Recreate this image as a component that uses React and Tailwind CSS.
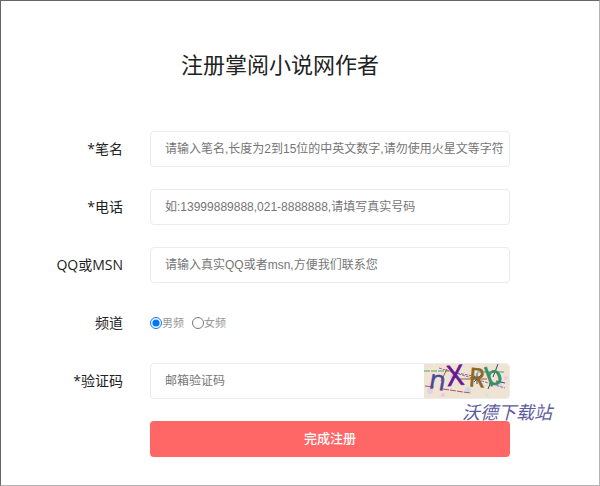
import React from "react";

const cjk = "font-['Liberation_Sans','Noto_Sans_CJK_SC',sans-serif]";

const inputClass =
  "h-9 w-full rounded border border-[#ebebeb] bg-white pl-[14px] text-xs text-[#333] placeholder:text-[#757575] outline-none focus:border-[#ff6666]";

function Row({ id, label, children }) {
  return (
    <div className="grid grid-cols-[122px_1fr] items-center gap-x-[27px]">
      <label
        htmlFor={id}
        className="text-right font-['Open_Sans','Noto_Sans_CJK_SC',sans-serif] text-[14px] leading-5 whitespace-nowrap text-[#222]"
      >
        {label}
      </label>
      {children}
    </div>
  );
}

function Captcha() {
  return (
    <svg
      viewBox="0 0 86 34"
      className="h-[34px] w-[86px] overflow-visible"
      role="img"
      aria-label="nXRb"
    >
      <path d="M1 0H83A3 3 0 0 1 86 3V31A3 3 0 0 1 83 34H1Z" fill="#efe4d4" />
      <g fill="#d9d3ea">
        <circle cx="7" cy="27" r="3" />
        <circle cx="30" cy="13" r="3" />
        <circle cx="45" cy="26" r="3" fill="#c8dcea" />
        <circle cx="20" cy="31" r="2" fill="#f2c6e2" />
        <circle cx="76" cy="20" r="3" />
        <circle cx="83" cy="14" r="2" fill="#f0c9e6" />
        <circle cx="10" cy="5" r="2" fill="#f4edb4" />
        <circle cx="64" cy="31" r="2" fill="#cfe8da" />
        <circle cx="37" cy="18" r="2" fill="#f4d7c4" />
      </g>
      <g fill="none" strokeWidth="1">
        <path d="M1 7H26M54 8H81" stroke="#4fa080" strokeDasharray="6 1" />
        <path d="M16 4L82 24M34 9L56 13" stroke="#8a6fa0" strokeDasharray="3 1" />
        <path d="M2 22L11 23M20 25L40 28L48 29" stroke="#b05068" strokeDasharray="6 1" />
        <path d="M37 15H64M18 17L24 5" stroke="#a8583c" />
        <path d="M75 0L70 13M67 20L65 25M73 17L82 19" stroke="#4c3f70" />
        <path d="M51 12L58 18M58 11L51 18M54 9V20" stroke="#41506a" />
      </g>
      <g className="font-['Open_Sans',sans-serif]" fontWeight="400">
        <text x="5" y="24" fontSize="27" fill="#4b4799" stroke="#4b4799" strokeWidth="0.5" transform="rotate(10 5 24)">n</text>
        <text x="25" y="22" fontSize="28" fill="#6b1690" stroke="#6b1690" strokeWidth="0.8" transform="rotate(-5 25 22)">X</text>
        <text x="45" y="22" fontSize="26" fill="#8c6822" stroke="#8c6822" strokeWidth="0.6" transform="rotate(5 45 22)">R</text>
        <text x="66" y="23" fontSize="26" fill="#359064" stroke="#359064" strokeWidth="0.8" transform="rotate(-20 66 23)">b</text>
      </g>
    </svg>
  );
}

export default function App() {
  return (
    <main
      className={`min-h-screen border border-t-[#6b6567] border-r-[#b4b4b4] border-b-[#b4b4b4] border-l-[#6b6567] bg-white pr-[89px] pb-7 ${cjk}`}
    >
      <h1 className="pt-[46px] pl-[49px] text-center font-['Noto_Sans_CJK_SC',sans-serif] text-[22px] leading-8 font-normal text-[#222]">
        注册掌阅小说网作者
      </h1>
      <form className="mt-[52px] flex flex-col gap-[22px]" onSubmit={(e) => e.preventDefault()}>
        <Row id="pen" label="*笔名">
          <input
            id="pen"
            type="text"
            className={inputClass}
            placeholder="请输入笔名,长度为2到15位的中英文数字,请勿使用火星文等字符"
          />
        </Row>
        <Row id="phone" label="*电话">
          <input
            id="phone"
            type="tel"
            className={inputClass}
            placeholder="如:13999889888,021-8888888,请填写真实号码"
          />
        </Row>
        <Row id="qq" label="QQ或MSN">
          <input
            id="qq"
            type="text"
            className={inputClass}
            placeholder="请输入真实QQ或者msn,方便我们联系您"
          />
        </Row>
        <div className="grid grid-cols-[122px_1fr] items-center gap-x-[27px]">
          <span
            id="channel"
            className="text-right font-['Open_Sans','Noto_Sans_CJK_SC',sans-serif] text-[14px] leading-5 text-[#222]"
          >
            频道
          </span>
          <div
            role="radiogroup"
            aria-labelledby="channel"
            className="flex h-9 items-center gap-2 text-[11px] leading-4 text-[#999]"
          >
            <label className="flex items-center">
              <input type="radio" name="channel" className="size-3" defaultChecked />
              男频
            </label>
            <label className="flex items-center">
              <input type="radio" name="channel" className="size-3" />
              女频
            </label>
          </div>
        </div>
        <Row id="code" label="*验证码">
          <div className="flex h-9 items-center rounded border border-[#ebebeb] focus-within:border-[#ff6666]">
            <input
              id="code"
              type="text"
              className="h-full min-w-0 flex-1 bg-transparent pl-[14px] text-xs text-[#333] outline-none placeholder:text-[#757575]"
              placeholder="邮箱验证码"
            />
            <Captcha />
          </div>
        </Row>
        <div className="relative pl-[149px]">
          <button
            type="submit"
            className="h-9 w-full rounded bg-[#ff6666] text-[13px] font-medium text-white"
          >
            完成注册
          </button>
          <span className="pointer-events-none absolute -top-[22px] -right-[42px] font-['Noto_Sans_CJK_SC',sans-serif] text-[18px] leading-6 font-normal whitespace-nowrap text-[#5d5c9f] italic">
            沃德下载站
          </span>
        </div>
      </form>
    </main>
  );
}
